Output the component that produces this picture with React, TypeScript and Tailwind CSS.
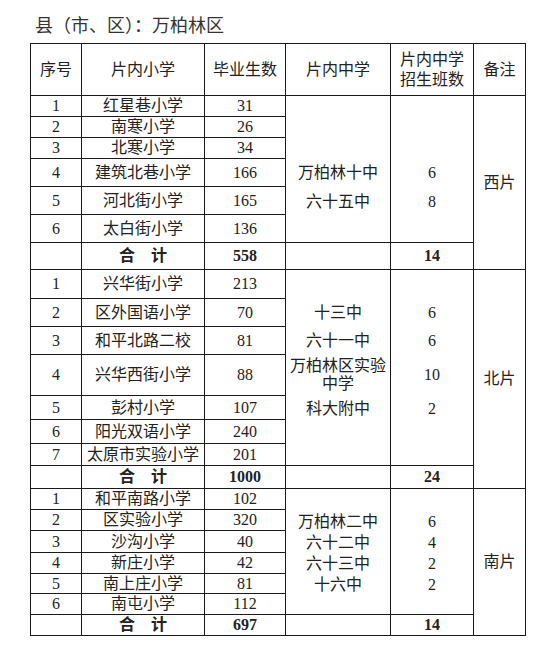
import React from 'react';

type School = [string, number];

type Zone = {
  name: string;
  schools: School[];
  heights: number[];
  totalHeight: number;
  total: number;
  middles: { name: React.ReactNode; classes: number; h: number }[];
  middlePad: string;
  classTotal: number;
};

const zones: Zone[] = [
  {
    name: '西片',
    schools: [
      ['红星巷小学', 31],
      ['南寒小学', 26],
      ['北寒小学', 34],
      ['建筑北巷小学', 166],
      ['河北街小学', 165],
      ['太白街小学', 136],
    ],
    heights: [21, 21, 21, 28, 28, 28],
    totalHeight: 27,
    total: 558,
    middles: [
      { name: '万柏林十中', classes: 6, h: 29 },
      { name: '六十五中', classes: 8, h: 29 },
    ],
    middlePad: 'pt-[37px]',
    classTotal: 14,
  },
  {
    name: '北片',
    schools: [
      ['兴华街小学', 213],
      ['区外国语小学', 70],
      ['和平北路二校', 81],
      ['兴华西街小学', 88],
      ['彭村小学', 107],
      ['阳光双语小学', 240],
      ['太原市实验小学', 201],
    ],
    heights: [29, 28, 28, 41, 24, 24, 22],
    totalHeight: 23,
    total: 1000,
    middles: [
      { name: '十三中', classes: 6, h: 28 },
      { name: '六十一中', classes: 6, h: 28 },
      {
        name: (
          <>
            万柏林区实验
            <br />
            中学
          </>
        ),
        classes: 10,
        h: 40,
      },
      { name: '科大附中', classes: 2, h: 28 },
    ],
    middlePad: 'pb-[14px]',
    classTotal: 24,
  },
  {
    name: '南片',
    schools: [
      ['和平南路小学', 102],
      ['区实验小学', 320],
      ['沙沟小学', 40],
      ['新庄小学', 42],
      ['南上庄小学', 81],
      ['南屯小学', 112],
    ],
    heights: [21, 21, 22, 21, 20, 21],
    totalHeight: 21,
    total: 697,
    middles: [
      { name: '万柏林二中', classes: 6, h: 21 },
      { name: '六十二中', classes: 4, h: 21 },
      { name: '六十三中', classes: 2, h: 21 },
      { name: '十六中', classes: 2, h: 21 },
    ],
    middlePad: 'pt-[4px]',
    classTotal: 14,
  },
];

const cell = 'border border-[#1a1a1a] p-0 text-center align-middle';

const ZoneRows: React.FC<{ zone: Zone }> = ({ zone }) => {
  const span = zone.schools.length;
  return (
    <>
      {zone.schools.map(([school, count], i) => (
        <tr key={school} style={{ height: zone.heights[i] }}>
          <td className={cell}>{i + 1}</td>
          <td className={`${cell} whitespace-nowrap`}>{school}</td>
          <td className={cell}>{count}</td>
          {i === 0 && (
            <>
              <td rowSpan={span} className={cell}>
                <div className={`flex flex-col ${zone.middlePad}`}>
                  {zone.middles.map((m, j) => (
                    <div
                      key={j}
                      className="flex items-center justify-center leading-[18px]"
                      style={{ height: m.h }}
                    >
                      <span>{m.name}</span>
                    </div>
                  ))}
                </div>
              </td>
              <td rowSpan={span} className={cell}>
                <div className={`flex flex-col ${zone.middlePad}`}>
                  {zone.middles.map((m, j) => (
                    <div
                      key={j}
                      className="flex items-center justify-center"
                      style={{ height: m.h }}
                    >
                      {m.classes}
                    </div>
                  ))}
                </div>
              </td>
              <td rowSpan={span + 1} className={cell}>
                {zone.name}
              </td>
            </>
          )}
        </tr>
      ))}
      <tr style={{ height: zone.totalHeight }}>
        <td className={cell}></td>
        <td className={`${cell} font-bold`}>合{'\u3000'}计</td>
        <td className={`${cell} font-bold`}>{zone.total}</td>
        <td className={cell}></td>
        <td className={`${cell} font-bold`}>{zone.classTotal}</td>
      </tr>
    </>
  );
};

const App: React.FC = () => {
  return (
    <div
      className="w-[550px] h-[645px] bg-white pt-[12px] text-[#222]"
      style={{ fontFamily: '"Liberation Serif", "Noto Sans CJK SC", serif' }}
    >
      <h1
        className="pl-[35px] text-[18px] leading-[24px] font-normal text-[#333]"
        style={{ fontFamily: '"Noto Sans CJK SC", sans-serif' }}
      >
        县（市、区）：万柏林区
      </h1>

      <table className="ml-[30px] mt-[7px] table-fixed border-collapse text-[16px] leading-[18px]">
        <colgroup>
          <col className="w-[51px]" />
          <col className="w-[123px]" />
          <col className="w-[81px]" />
          <col className="w-[105px]" />
          <col className="w-[83px]" />
          <col className="w-[52px]" />
        </colgroup>
        <thead>
          <tr className="h-[52px]">
            <th className={`${cell} font-normal`}>序号</th>
            <th className={`${cell} font-normal`}>片内小学</th>
            <th className={`${cell} font-normal`}>毕业生数</th>
            <th className={`${cell} font-normal`}>片内中学</th>
            <th className={`${cell} font-normal leading-[20px]`}>
              片内中学
              <br />
              招生班数
            </th>
            <th className={`${cell} font-normal`}>备注</th>
          </tr>
        </thead>
        <tbody>
          {zones.map((z) => (
            <ZoneRows key={z.name} zone={z} />
          ))}
        </tbody>
      </table>
    </div>
  );
};

export default App;
